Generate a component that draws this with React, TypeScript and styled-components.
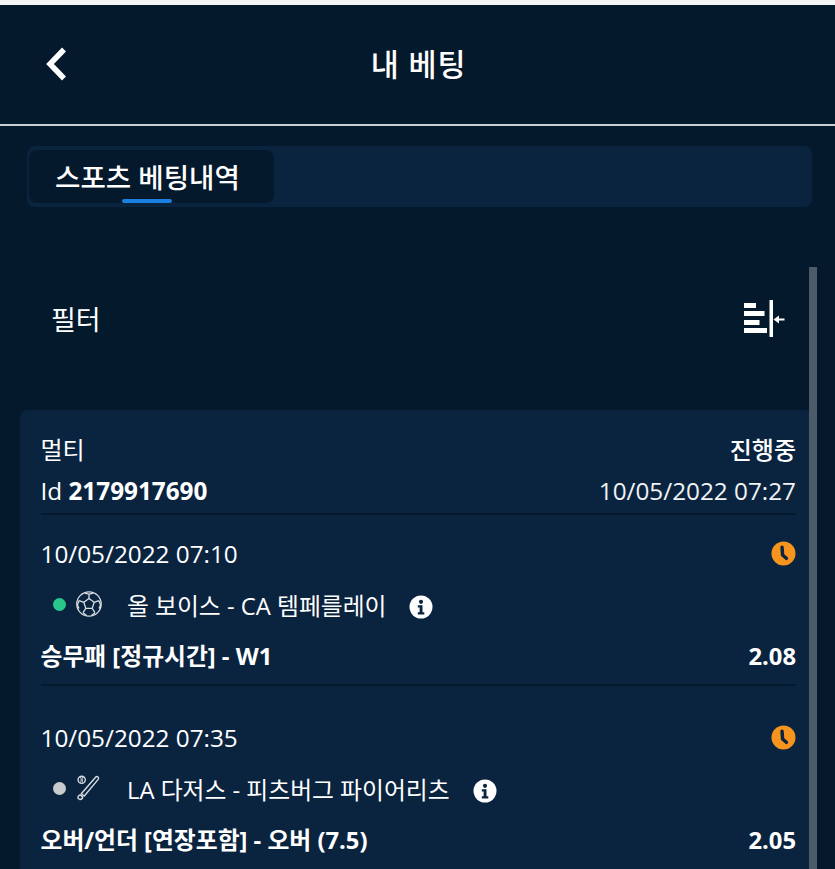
import styled, { createGlobalStyle } from "styled-components";

const GlobalStyle = createGlobalStyle`
  html, body {
    margin: 0;
    padding: 0;
    background: #04192c;
  }
  body {
    font-family: "Open Sans", "Noto Sans CJK KR", sans-serif;
    color: #fff;
  }
  * {
    box-sizing: border-box;
  }
`;

const Page = styled.div`
  position: relative;
  width: 835px;
  height: 869px;
  overflow: hidden;
  background: #04192c;
  border-top: 5px solid #f4f5f6;
`;

const Header = styled.header`
  height: 121px;
  display: flex;
  align-items: center;
  justify-content: center;
  position: relative;
  border-bottom: 2px solid #c9ced2;
`;

const BackButton = styled.div`
  position: absolute;
  left: 43px;
  top: 39px;
  width: 28px;
  height: 40px;
`;

const Title = styled.h1`
  margin: 0 0 1px 2px;
  font-size: 30.5px;
  font-weight: 500;
  line-height: 40px;
  letter-spacing: 0.9px;
`;

const TabBar = styled.div`
  margin: 20px 23px 0 27px;
  height: 61px;
  padding: 4px 2px;
  background: #0a2440;
  border-radius: 8px;
`;

const Tab = styled.div`
  position: relative;
  width: 245px;
  height: 53px;
  padding: 6px 0 0 26px;
  background: #04192c;
  border-radius: 8px;
  font-size: 27.6px;
  font-weight: 500;
  line-height: 42px;
  white-space: nowrap;
  &::after {
    content: "";
    position: absolute;
    left: 93px;
    bottom: 0;
    width: 50px;
    height: 4px;
    border-radius: 2px;
    background: #1a7fe0;
  }
`;

const FilterRow = styled.div`
  display: flex;
  align-items: center;
  justify-content: space-between;
  height: 203px;
  padding: 20px 49px 0 51px;
  font-size: 27px;
  font-weight: 400;
`;

const Scrollbar = styled.div`
  position: absolute;
  left: 809px;
  top: 262px;
  bottom: 0;
  width: 8px;
  background: #4d5a67;
`;

const Card = styled.section`
  margin: 0 0 0 20px;
  width: 792px;
  height: 470px;
  padding: 19px 16px 0 20.500px;
  background: #0a2440;
  border-radius: 8px 8px 0 0;
`;

const CardTop = styled.div`
  border-bottom: 2px solid #04192c;
  padding-bottom: 2px;
`;

const Row = styled.div`
  display: flex;
  align-items: center;
  justify-content: space-between;
  height: 41px;
  font-size: 24.3px;
  line-height: 41px;
  white-space: nowrap;
`;

const Strong = styled.span`
  font-weight: 700;
`;

const Status = styled.span`
  font-size: 24px;
  font-weight: 500;
`;

const Label = styled.span`
  font-size: 24px;
`;

const Muted = styled.span`
  color: #f1f3f5;
`;

const Leg = styled.div<{ $last?: boolean }>`
  padding-top: 18px;
  height: ${(p) => (p.$last ? "auto" : "171px")};
  border-bottom: ${(p) => (p.$last ? "none" : "2px solid #04192c")};
  margin-bottom: 13px;
`;

const EventRow = styled.div`
  display: flex;
  align-items: center;
  height: 44px;
  margin-top: 8px;
  padding-left: 12.500px;
  font-size: 23.8px;
  white-space: nowrap;
`;

const StatusDot = styled.span<{ $color: string }>`
  width: 13px;
  height: 13px;
  border-radius: 50%;
  background: ${(p) => p.$color};
  flex: none;
`;

const SportIcon = styled.svg`
  width: 28px;
  height: 28px;
  margin-left: 9px;
  flex: none;
`;

const EventName = styled.span`
  margin-left: 24px;
`;

const InfoIcon = styled.svg`
  width: 24px;
  height: 24px;
  margin-left: 23px;
  margin-top: 6px;
  flex: none;
`;

const MarketRow = styled(Row)`
  margin-top: 10px;
  font-size: 23.8px;
  font-weight: 700;
`;

const ClockIcon = () => (
  <svg width="25" height="25" viewBox="0 0 26 26">
    <circle cx="13" cy="13" r="12.5" fill="#f7941d" />
    <path d="M11.500 6.500 L12 14.500 L16 18" fill="none" stroke="#0a2440" strokeWidth="3.600" strokeLinecap="round" strokeLinejoin="round" />
  </svg>
);

const Info = () => (
  <InfoIcon viewBox="0 0 24 24">
    <circle cx="12" cy="12" r="11.5" fill="#fff" />
    <circle cx="12" cy="6.8" r="2.1" fill="#0a2440" />
    <path d="M8.8 10.3h4.7v7h1.8v2.2H8.800v-2.200h1.800v-4.800H8.800z" fill="#0a2440" />
  </InfoIcon>
);

const Ball = () => (
  <SportIcon viewBox="0 0 28 28" fill="none" stroke="#d8dde2" strokeWidth="1.3" strokeLinejoin="round">
    <circle cx="14" cy="14" r="12.2" />
    <path d="M14 8.500l5.200 3.800-2 6.100h-6.400l-2-6.100z" />
    <path d="M14 8.500V4.200M19.200 12.300l4.600-1.700M17.200 18.400l2.800 4.300M10.800 18.400l-2.800 4.300M8.800 12.300l-4.600-1.700" />
    <path d="M9.500 3.200L14 4.200l4.500-1M23.800 10.600l1.800 4.400-1.600 3.600M20 22.700l-3.800 3M8 22.700l3.800 3M4.200 10.600L2.400 15l1.600 3.600" />
  </SportIcon>
);

const Bat = () => (
  <SportIcon viewBox="0 0 28 28" fill="none" stroke="#d8dde2" strokeWidth="1.4" strokeLinejoin="round">
    <circle cx="6.700" cy="5.800" r="3.600" />
    <path d="M5.500 2.900c.9 1.900.9 3.900 0 5.800M7.900 2.900c-.9 1.900-.9 3.900 0 5.800" strokeWidth="1" />
    <path d="M21 2.800c1.400-.8 3.100.7 2.400 2.300L9.300 22l-3-2.300z" />
    <path d="M3 24.200c-.4-1.300.8-2.900 2.200-3.300l2.500 2c-.2 1.500-1.500 2.700-2.900 2.600z" />
  </SportIcon>
);

const FilterIcon = () => (
  <svg width="42" height="38" viewBox="0 0 42 38" fill="#fff">
    <rect x="0" y="3" width="12" height="5" />
    <rect x="0" y="11" width="20.500" height="5" />
    <rect x="0" y="20" width="15.500" height="5" />
    <rect x="0" y="28" width="23" height="5" />
    <rect x="25.500" y="0" width="3.500" height="37" />
    <path d="M29.500 19.500l5.500-4v3h5.500v2H35v3z" />
  </svg>
);

const legs = [
  {
    time: "10/05/2022 07:10",
    dot: "#28c88a",
    icon: <Ball />,
    name: "올 보이스 - CA 템페를레이",
    market: "승무패 [정규시간] - W1",
    odds: "2.08",
  },
  {
    time: "10/05/2022 07:35",
    dot: "#c9cbce",
    icon: <Bat />,
    name: "LA 다저스 - 피츠버그 파이어리츠",
    market: "오버/언더 [연장포함] - 오버 (7.5)",
    odds: "2.05",
  },
];

export default function App() {
  return (
    <>
      <GlobalStyle />
      <Page>
        <Header>
          <BackButton>
            <svg width="28" height="40" viewBox="0 0 28 40" fill="none">
              <path d="M21 5.500L7 20l14 14.500" stroke="#fff" strokeWidth="5.500" strokeLinejoin="miter" />
            </svg>
          </BackButton>
          <Title>내 베팅</Title>
        </Header>
        <TabBar>
          <Tab>스포츠 베팅내역</Tab>
        </TabBar>
        <FilterRow>
          <span>필터</span>
          <FilterIcon />
        </FilterRow>
        <Scrollbar />
        <Card>
          <CardTop>
            <Row>
              <Label>멀티</Label>
              <Status>진행중</Status>
            </Row>
            <Row>
              <span>
                Id <Strong>2179917690</Strong>
              </span>
              <Muted>10/05/2022 07:27</Muted>
            </Row>
          </CardTop>
          {legs.map((leg, i) => (
            <Leg key={leg.time} $last={i === legs.length - 1}>
              <Row>
                <span>{leg.time}</span>
                <ClockIcon />
              </Row>
              <EventRow>
                <StatusDot $color={leg.dot} />
                {leg.icon}
                <EventName>{leg.name}</EventName>
                <Info />
              </EventRow>
              <MarketRow>
                <span>{leg.market}</span>
                <span>{leg.odds}</span>
              </MarketRow>
            </Leg>
          ))}
        </Card>
      </Page>
    </>
  );
}
